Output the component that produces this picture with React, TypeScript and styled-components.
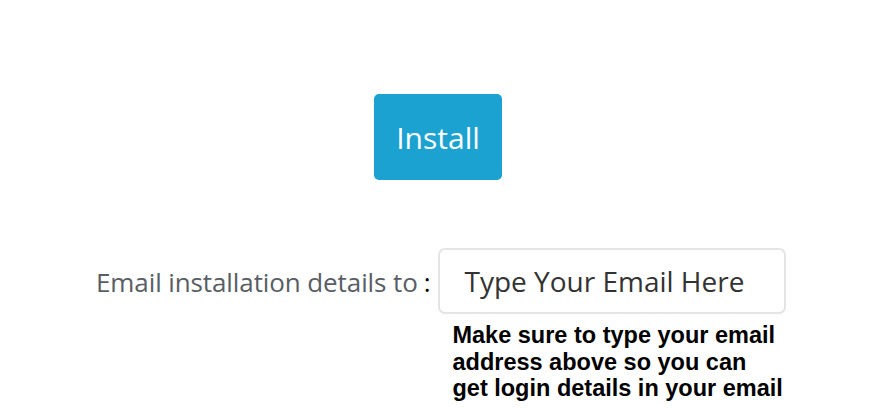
import React from "react";
import styled, { createGlobalStyle } from "styled-components";

const Global = createGlobalStyle`
  html, body { margin: 0; padding: 0; background: #fff; }
  body { font-family: "Open Sans", sans-serif; }
`;

const Page = styled.div`
  width: 894px;
  height: 408px;
  overflow: hidden;
  display: flex;
  flex-direction: column;
`;

const ButtonRow = styled.div`
  display: flex;
  padding-top: 94px;
  padding-left: 374px;
`;

const InstallButton = styled.button`
  width: 128px;
  height: 86px;
  border: none;
  border-radius: 5px;
  background: #1ba2d1;
  color: #fff;
  font-family: "Open Sans", sans-serif;
  font-size: 30px;
  padding: 0;
  cursor: pointer;
`;

const FormRow = styled.div`
  display: flex;
  align-items: flex-start;
  margin-top: 68px;
  padding-left: 96px;
`;

const Label = styled.label`
  height: 68px;
  display: flex;
  align-items: center;
  color: #585e64;
  font-size: 26px;
  letter-spacing: -0.1px;
  white-space: nowrap;
  margin-right: 8px;
`;

const Colon = styled.span`
  color: #000;
  margin-left: 6px;
`;

const Field = styled.div`
  display: flex;
  flex-direction: column;
`;

const EmailInput = styled.input`
  box-sizing: border-box;
  width: 348px;
  height: 66px;
  border: 2px solid #e4e4e4;
  border-radius: 7px;
  padding: 0 0 0 24px;
  font-family: "Open Sans", sans-serif;
  font-size: 28px;
  color: #333;
  outline: none;
  &::placeholder { color: #333; opacity: 1; }
`;

const Hint = styled.p`
  margin: 8px 0 0 14px;
  font-family: "Liberation Sans", Arial, sans-serif;
  font-weight: bold;
  font-size: 23.5px;
  line-height: 26.5px;
  color: #000;
  white-space: nowrap;
`;

export default function App() {
  return (
    <Page>
      <Global />
      <ButtonRow>
        <InstallButton>Install</InstallButton>
      </ButtonRow>
      <FormRow>
        <Label>
          Email installation details to<Colon>:</Colon>
        </Label>
        <Field>
          <EmailInput placeholder="Type Your Email Here" />
          <Hint>
            Make sure to type your email
            <br />
            address above so you can
            <br />
            get login details in your email
          </Hint>
        </Field>
      </FormRow>
    </Page>
  );
}
